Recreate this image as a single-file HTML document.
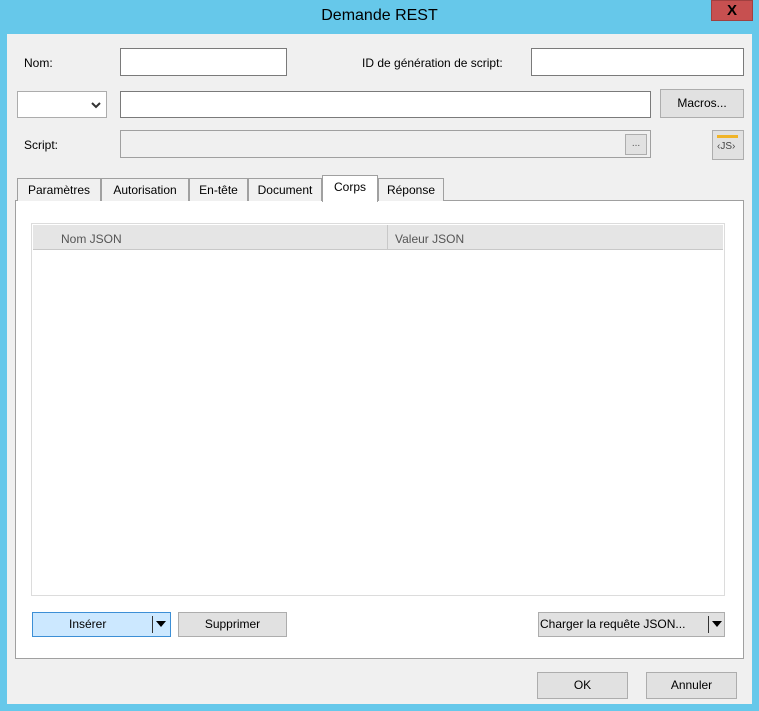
<!DOCTYPE html>
<html><head><meta charset="utf-8"><style>
*{box-sizing:border-box;margin:0;padding:0}
body{width:759px;height:711px;background:#66c8ea;position:relative;overflow:hidden;font-family:"Liberation Sans",sans-serif;font-size:12px;color:#000}
div,span{position:absolute}
.client{left:7px;top:34px;width:745px;height:670px;background:#f0f0f0}
.in{background:#fff;border:1px solid #7a7a7a}
.btn{background:#e1e1e1;border:1px solid #adadad;text-align:center}
.lbl{white-space:nowrap}
.tab{top:178px;height:23px;background:#f0f0f0;border:1px solid #a0a0a0;border-bottom:none;text-align:center;line-height:22px;white-space:nowrap}
</style></head><body>
<div style="left:0;top:7px;width:759px;text-align:center;font-size:16px;color:#000">Demande REST</div>
<div style="left:711px;top:0;width:42px;height:21px;background:#c75050;border:1px solid #a04040;color:#000;font-weight:bold;font-size:15px;text-align:center;line-height:19px">X</div>
<div class="client"></div>
<div class="lbl" style="left:24px;top:56px">Nom:</div>
<div class="in" style="left:120px;top:48px;width:167px;height:28px"></div>
<div class="lbl" style="left:362px;top:56px">ID de génération de script:</div>
<div class="in" style="left:531px;top:48px;width:213px;height:28px"></div>
<div class="in" style="left:17px;top:91px;width:90px;height:27px;border-color:#acacac"><svg style="position:absolute;left:73px;top:10px" width="10" height="7"><path d="M1 1L5 5L9 1" stroke="#333" stroke-width="2" fill="none"/></svg></div>
<div class="in" style="left:120px;top:91px;width:531px;height:27px"></div>
<div class="btn" style="left:660px;top:89px;width:84px;height:29px;line-height:27px">Macros...</div>
<div class="lbl" style="left:24px;top:138px">Script:</div>
<div class="in" style="left:120px;top:130px;width:531px;height:28px;background:#f0f0f0;border-color:#a0a0a0"></div>
<div class="btn" style="left:625px;top:134px;width:22px;height:21px;font-size:10px;line-height:17px;color:#555">...</div>
<div class="btn" style="left:712px;top:130px;width:32px;height:30px;"><div style="left:4px;top:4px;width:21px;height:3px;background:#f0b429"></div><span style="left:4px;top:10px;font-size:10px;color:#444">‹JS›</span></div>
<div style="left:15px;top:200px;width:729px;height:459px;background:#fff;border:1px solid #a0a0a0"></div>
<div class="tab" style="left:17px;width:84px">Paramètres</div>
<div class="tab" style="left:101px;width:88px">Autorisation</div>
<div class="tab" style="left:189px;width:59px">En-tête</div>
<div class="tab" style="left:248px;width:74px">Document</div>
<div class="tab" style="left:322px;top:175px;width:56px;height:27px;background:#fff;line-height:22px">Corps</div>
<div class="tab" style="left:378px;width:66px">Réponse</div>
<div style="left:31px;top:223px;width:694px;height:373px;background:#fff;border:1px solid #dcdcdc"></div>
<div style="left:33px;top:225px;width:690px;height:25px;background:#e5e5e5;border-bottom:1px solid #c8c8c8"></div>
<div style="left:387px;top:225px;width:1px;height:25px;background:#c8c8c8"></div>
<div class="lbl" style="left:61px;top:232px;color:#555">Nom JSON</div>
<div class="lbl" style="left:395px;top:232px;color:#555">Valeur JSON</div>
<div class="btn" style="left:32px;top:612px;width:139px;height:25px;background:#cce8ff;border-color:#3c8fd6;line-height:23px"><span style="left:36px;top:0">Insérer</span><span style="left:119px;top:3px;width:1px;height:17px;background:#333"></span><svg style="position:absolute;left:123px;top:8px" width="10" height="7"><path d="M0 0H10L5 6Z" fill="#000"/></svg></div>
<div class="btn" style="left:178px;top:612px;width:109px;height:25px;line-height:23px">Supprimer</div>
<div class="btn" style="left:538px;top:612px;width:187px;height:25px;line-height:23px;text-align:left"><span style="left:1px;top:0;white-space:nowrap">Charger la requête JSON...</span><span style="left:169px;top:3px;width:1px;height:17px;background:#333"></span><svg style="position:absolute;left:173px;top:8px" width="10" height="7"><path d="M0 0H10L5 6Z" fill="#000"/></svg></div>
<div class="btn" style="left:537px;top:672px;width:91px;height:27px;line-height:25px">OK</div>
<div class="btn" style="left:646px;top:672px;width:91px;height:27px;line-height:25px">Annuler</div>
</body></html>
